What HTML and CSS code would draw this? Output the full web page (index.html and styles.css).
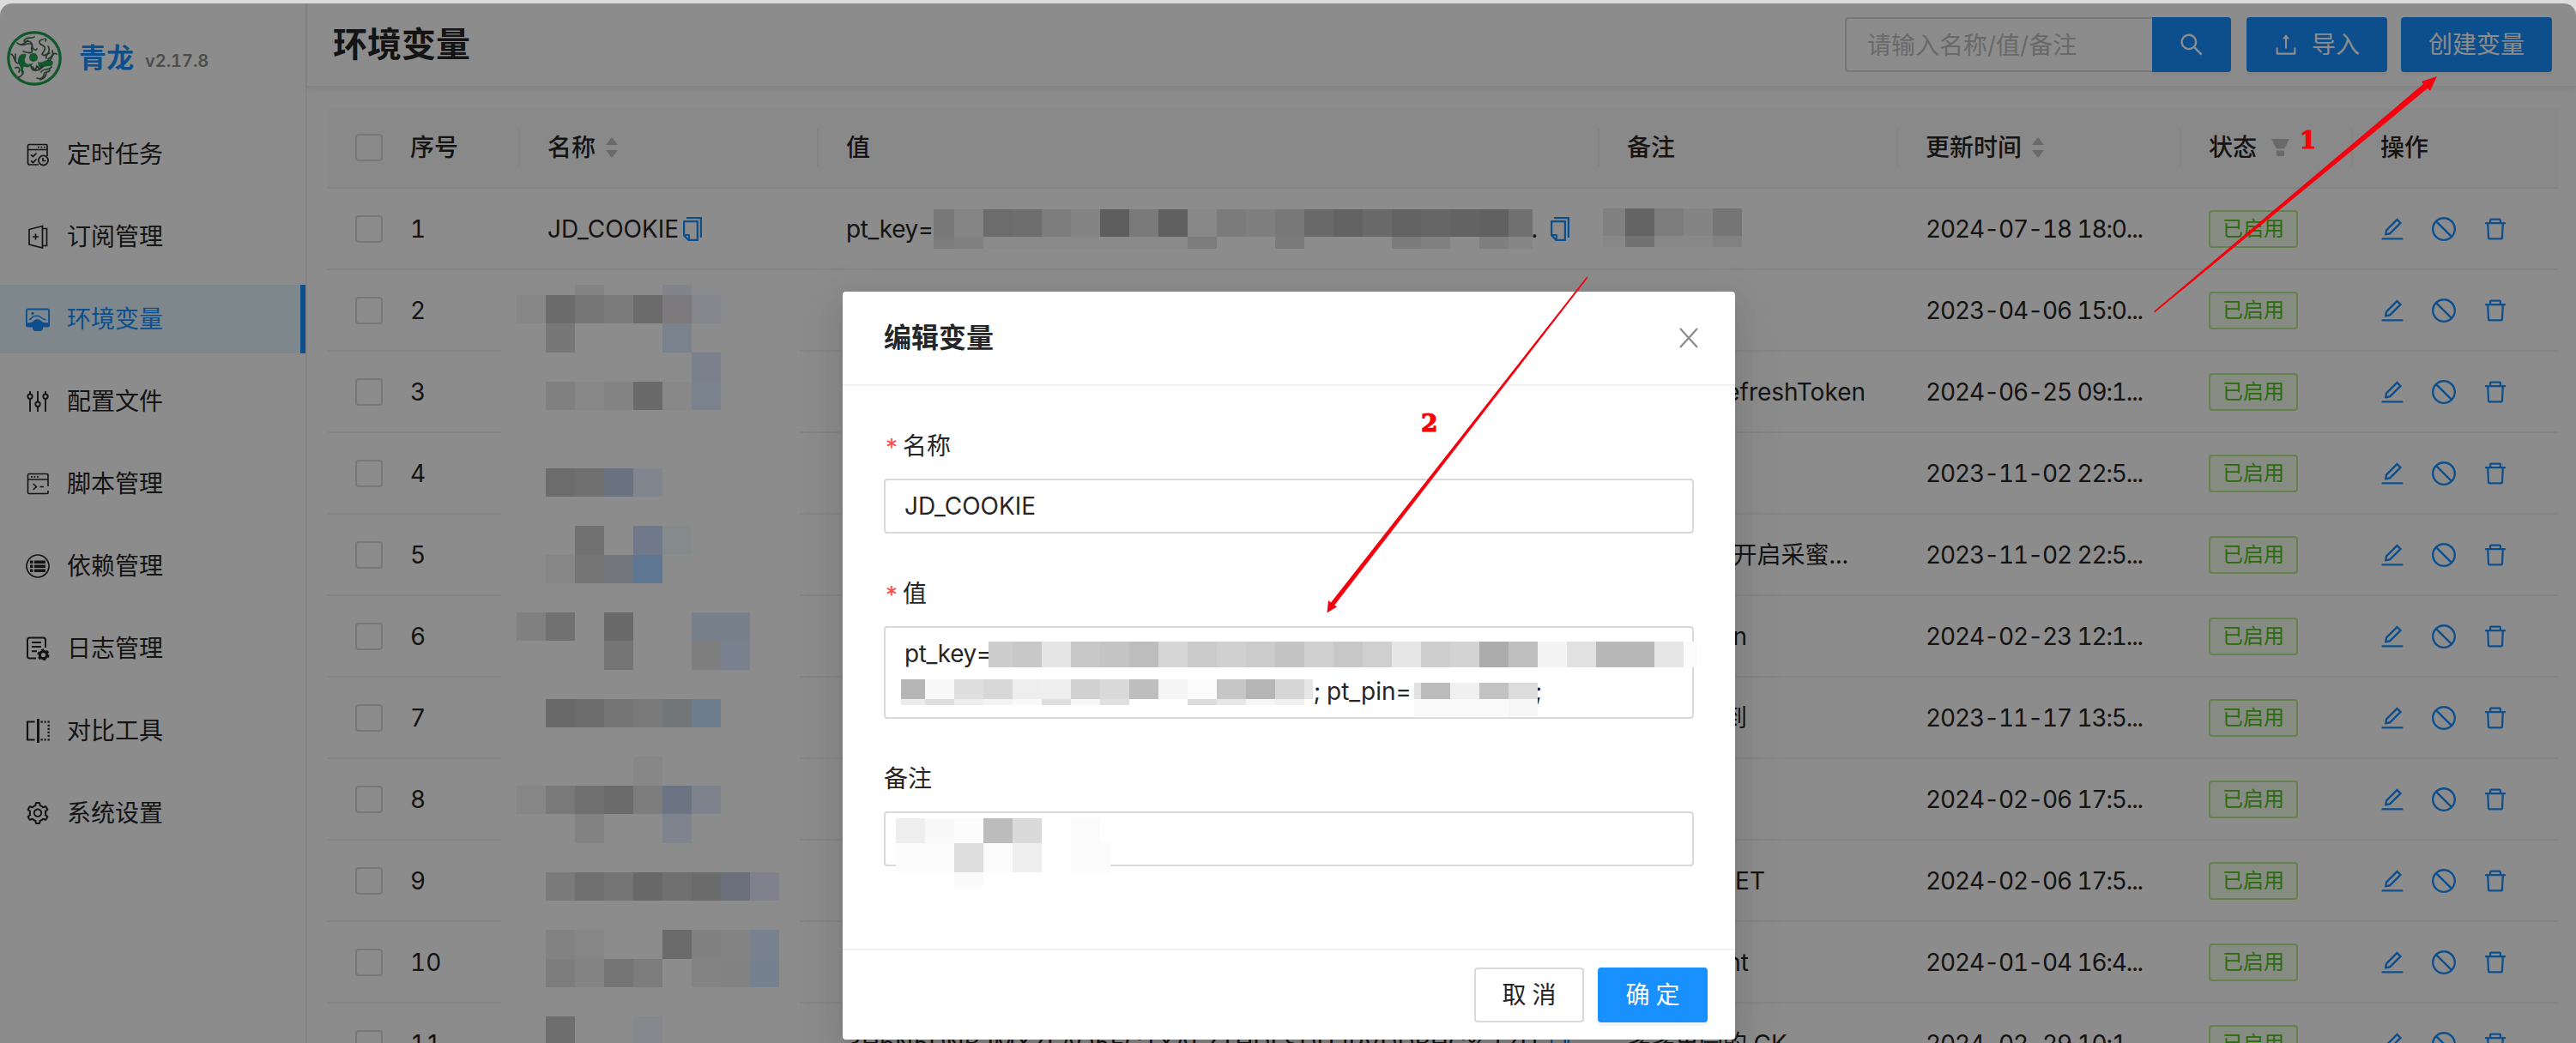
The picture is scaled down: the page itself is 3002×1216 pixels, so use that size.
FILE: index.html
```html
<!DOCTYPE html>
<html lang="zh-CN">
<head>
<meta charset="utf-8">
<title>环境变量</title>
<link rel="stylesheet" href="styles.css">
</head>
<body>
<svg class="sprite" width="0" height="0">
  <symbol id="i-search" viewBox="0 0 1024 1024"><path d="M909.6 854.5L649.9 594.8C690.2 542.7 712 479 712 412c0-80.2-31.3-155.4-87.9-212.1-56.6-56.7-132-87.9-212.1-87.9s-155.5 31.3-212.1 87.9C143.2 256.5 112 331.8 112 412c0 80.1 31.3 155.5 87.9 212.1C256.5 680.8 331.8 712 412 712c67 0 130.6-21.8 182.7-62l259.7 259.6a8.2 8.2 0 0011.6 0l43.6-43.5a8.2 8.2 0 000-11.6zM570.4 570.4C528 612.7 471.8 636 412 636s-116-23.3-158.4-65.6C211.3 528 188 471.8 188 412s23.3-116.1 65.6-158.4C296 211.3 352.2 188 412 188s116.1 23.2 158.4 65.6S636 352.2 636 412s-23.3 116.1-65.6 158.4z"/></symbol>
  <symbol id="i-upload" viewBox="0 0 28 28"><path d="M14 2.2l4.2 5.3h-3.1v11h-2.2v-11H9.800zM2.600 17.500h2.100v6h18.600v-6h2.100v7.200q0 1-1 1H3.600q-1 0-1-1z"/></symbol>
  <symbol id="i-edit" viewBox="0 0 1024 1024"><path d="M257.700 752c2 0 4-.2 6-.5L431.900 722c2-.4 3.900-1.300 5.300-2.800l423.900-423.900a9.960 9.960 0 000-14.100L694.900 114.900c-1.900-1.900-4.400-2.900-7.100-2.900s-5.200 1-7.100 2.900L256.800 538.800c-1.500 1.500-2.400 3.300-2.800 5.300l-29.500 168.200a33.500 33.500 0 009.400 29.800c6.600 6.400 14.900 9.900 23.800 9.900zm67.400-174.400L687.800 215l73.300 73.300-362.700 362.600-88.900 15.700 15.600-89zM880 836H144c-17.700 0-32 14.300-32 32v36c0 4.400 3.600 8 8 8h784c4.400 0 8-3.600 8-8v-36c0-17.700-14.300-32-32-32z"/></symbol>
  <symbol id="i-stop" viewBox="0 0 1024 1024"><path d="M512 64C264.600 64 64 264.600 64 512s200.600 448 448 448 448-200.600 448-448S759.400 64 512 64zm0 820c-205.400 0-372-166.600-372-372 0-89 31.300-170.800 83.500-234.800l523.300 523.300C682.800 852.700 601 884 512 884zm288.500-137.200L277.200 223.500C341.200 171.300 423 140 512 140c205.400 0 372 166.600 372 372 0 89-31.300 170.800-83.500 234.800z"/></symbol>
  <symbol id="i-delete" viewBox="0 0 1024 1024"><path d="M360 184h-8c4.400 0 8-3.600 8-8v8h304v-8c0 4.400 3.600 8 8 8h-8v72h72v-80c0-35.300-28.700-64-64-64H352c-35.300 0-64 28.700-64 64v80h72v-72zm504 72H160c-17.700 0-32 14.300-32 32v32c0 4.400 3.600 8 8 8h60.400l24.700 523c1.600 34.100 29.800 61 63.900 61h454c34.200 0 62.300-26.800 63.900-61l24.700-523H888c4.400 0 8-3.600 8-8v-32c0-17.700-14.300-32-32-32zM731.300 840H292.700l-24.200-512h487l-24.200 512z"/></symbol>
  <symbol id="i-copy" viewBox="0 0 1024 1024"><path d="M832 64H296c-4.400 0-8 3.600-8 8v56c0 4.400 3.600 8 8 8h496v688c0 4.400 3.600 8 8 8h56c4.400 0 8-3.600 8-8V96c0-17.700-14.300-32-32-32zM704 192H192c-17.700 0-32 14.300-32 32v530.700c0 8.500 3.400 16.600 9.400 22.600l173.300 173.300c2.200 2.200 4.700 4 7.400 5.500v1.900h4.200c3.500 1.300 7.200 2 11 2H704c17.700 0 32-14.300 32-32V224c0-17.700-14.300-32-32-32zM350 856.200L263.900 770H350v86.200zM664 888H414V746c0-22.100-17.900-40-40-40H232V264h432v624z"/></symbol>
  <symbol id="i-sort" viewBox="0 0 16 26"><path d="M8 1l7 9H1zM8 25l7-9H1z"/></symbol>
</svg>

<div class="window">
  <div class="app">
    <aside class="sidebar">
      <div class="brand">
        <svg class="logo" viewBox="0 0 64 64" stroke="#24a150" stroke-linecap="round">
          <circle cx="32" cy="32" r="30.200" stroke-width="3.300"/>
          <circle cx="31" cy="31" r="5" fill="#24a150" stroke="none"/>
          <path d="M13 37c-1-8 4-11 9-10 1 4-2 5-1 9 2 4 7 3 10 1-2 5-9 7-11 4-2 4 0 7-2 11-2-5-1-9-5-15z" fill="#24a150" stroke="none"/>
          <path d="M36 36c6 3 10-5 17-1 2 3 0 7-4 6-5 0-8 3-12 1z" fill="#24a150" stroke="none"/>
          <g stroke="#44694e" stroke-width="1.700">
            <path d="M12 14c5 5 10-1 13-3-5 3-6 1-4-1 4-4 8 0 11-3M16 16c5 2 9-4 13 0 2 3-2 3 0 6 2 4-3 4-6 3l-4-1M24 12c4 0 6 3 6 8 1 2 4 3 5 1"/>
            <path d="M42 10c-6 1-5 5 0 7 5 3 1 7-1 10 2 3 4 1 7-1 2-3 1-7 0-8M53 23c2 4-2 8-5 10M58 27c-6-3-4 7-10 8M50 26c-3 1-5 3-4 6M44 9c2 0 2 2 1 3"/>
            <path d="M5 27c5 2 2 9 8 11M10 27v8M10 43c4-2 6 2 4 5M17 46c5 2 0 7-3 8M28 40c0 5 3 8 10 5l4-3M30 42l3 4 2-5 3 4 3-5"/>
            <path d="M52 42c-3 5-10 1-12 6M50 46c-2 4-7 0-7 6-1 4-5 4-8 3M46 50c-1 4-4 6-7 7"/>
          </g>
        </svg>
        <span class="brand-name">青龙</span><span class="version">v2.17.8</span>
      </div>
      <nav class="menu">
        <a class="item"><svg viewBox="0 0 28 28"><g fill="none" stroke="currentColor" stroke-width="1.700"><path d="M15 26H4.500Q2.500 26 2.500 24V4q0-1.500 1.500-1.500h19.500q1.500 0 1.500 1.500v12M2.500 8.500H25M6 14.500l2.500 2 4-4M6 21.500l2.500 2 4-4"/><circle cx="20.500" cy="21" r="5.600"/><path d="M20 18v3.500h3.500"/></g><path d="M14 4.700h1.700v1.700H14zM17.500 4.700h1.700v1.700h-1.700zM21 4.700h1.700v1.700H21z"/></svg>定时任务</a>
        <a class="item"><svg viewBox="0 0 28 28"><g fill="none" stroke="currentColor" stroke-width="1.700"><path d="M4 5.500L19.500 1.500v25.500L4 23zM19.500 4.500H24.500v20H19.500M11.500 10.500v7M8 14h7"/></g></svg>订阅管理</a>
        <a class="item active"><svg viewBox="0 0 28 28"><path fill-rule="evenodd" d="M2.500 1.500h23q2.500 0 2.500 2.500V21q0 2.500-2.500 2.500H20v3h-1.500V28h-9v-1.500H8v-3H2.500Q0 23.500 0 21V4q0-2.500 2.500-2.500zM1.900 3.400v14.800h2.600q2.500-.2 4.500-1.700 4.500-5 10 .5 2 1.500 4 1.200h3.100V3.400z"/><path d="M4 14.800c4-1 3.500-4.500 6-4.300s4.500-1 7 1 3 3 6.500 3.300" fill="none" stroke="currentColor" stroke-width="1.500"/><circle cx="8" cy="7.300" r="1.600"/></svg>环境变量</a>
        <a class="item"><svg viewBox="0 0 28 28"><g fill="none" stroke="currentColor" stroke-width="1.900"><path d="M5 2v3.500M5 11v15M14 2v12.500M14 20v6M23 2v3.500M23 11v15"/><circle cx="5" cy="8.200" r="2.700"/><circle cx="14" cy="17.200" r="2.700"/><circle cx="23" cy="8.200" r="2.700"/></g></svg>配置文件</a>
        <a class="item"><svg viewBox="0 0 28 28"><g fill="none" stroke="currentColor" stroke-width="1.600"><path d="M26 17V3.500q0-1-1-1H3.500q-1 0-1 1v21q0 1 1 1H25q1 0 1-1V22M2.500 9H26M8.500 14l4 3.500-4 3.500M16.500 17.500H21"/></g><path d="M6 5h1.800v1.800H6zM9.500 5h1.800v1.800H9.500zM13 5h1.800v1.800H13z"/></svg>脚本管理</a>
        <a class="item"><svg viewBox="0 0 28 28"><circle cx="14" cy="14" r="13" fill="none" stroke="currentColor" stroke-width="1.700"/><path d="M5 7.500h3.500V11H5zM10 7.500h13V11H10zM5 12.500h3.500V16H5zM10 12.500h13V16H10zM5 17.500h3.500V21H5zM10 17.500h13V21H10z"/></svg>依赖管理</a>
        <a class="item"><svg viewBox="0 0 28 28"><path d="M12 25.500H4.500Q2 25.500 2 23V4q0-2.500 2.500-2.500h16Q23 1.500 23 4v9M7 7h11M7 12h11M7 17.200h6" fill="none" stroke="currentColor" stroke-width="2"/><circle cx="20.500" cy="21.500" r="4.200" fill="none" stroke="currentColor" stroke-width="3.200"/><circle cx="20.500" cy="21.500" r="6.200" fill="none" stroke="currentColor" stroke-width="1.800" stroke-dasharray="3.300 3.190"/></svg>日志管理</a>
        <a class="item"><svg viewBox="0 0 28 28"><path d="M10.500 3.500H2v21h8.500" fill="none" stroke="currentColor" stroke-width="2.200"/><path d="M13 0h3v28h-3zM17.500 2.500h2.200v2.200h-2.200zM21.500 2.500h2.200v2.200h-2.200zM25.500 2.500h2.200v2.200h-2.200zM25.500 6.800h2.200V9h-2.200zM25.500 10.800h2.200V13h-2.200zM25.500 14.800h2.200V17h-2.200zM25.500 18.800h2.200V21h-2.200zM17.500 23.300h2.200v2.200h-2.200zM21.500 23.300h2.200v2.200h-2.200zM25.500 23.300h2.200v2.200h-2.200z"/></svg>对比工具</a>
        <a class="item"><svg viewBox="32 32 960 960"><path d="M924.800 625.700l-65.500-56c3.100-19 4.700-38.400 4.700-57.800s-1.600-38.800-4.700-57.800l65.500-56a32.030 32.030 0 009.300-35.200l-.9-2.600a443.740 443.740 0 00-79.700-137.900l-1.800-2.100a32.120 32.120 0 00-35.100-9.500l-81.300 28.900c-30-24.600-63.500-44-99.700-57.600l-15.700-85a32.050 32.050 0 00-25.800-25.700l-2.700-.5c-52.100-9.400-106.900-9.400-159 0l-2.700.5a32.050 32.050 0 00-25.800 25.700l-15.800 85.400a351.860 351.860 0 00-99 57.400l-81.900-29.100a32 32 0 00-35.100 9.500l-1.800 2.100a446.020 446.020 0 00-79.700 137.900l-.9 2.600c-4.500 12.500-.8 26.500 9.300 35.200l66.300 56.600c-3.100 18.800-4.600 38-4.600 57.100 0 19.200 1.500 38.400 4.600 57.100L99 625.500a32.030 32.030 0 00-9.300 35.200l.9 2.600c18.100 50.400 44.900 96.900 79.700 137.900l1.800 2.100a32.120 32.120 0 0035.100 9.500l81.900-29.100c29.800 24.500 63.100 43.900 99 57.400l15.800 85.400a32.050 32.050 0 0025.800 25.700l2.700.5a449.400 449.400 0 00159 0l2.700-.5a32.050 32.050 0 0025.800-25.700l15.700-85a350 350 0 0099.700-57.600l81.300 28.900a32 32 0 0035.100-9.500l1.800-2.100c34.800-41.100 61.600-87.500 79.700-137.900l.9-2.600c4.500-12.300.8-26.300-9.300-35zM788.300 465.900c2.500 15.100 3.800 30.600 3.800 46.100s-1.300 31-3.800 46.100l-6.600 40.100 74.700 63.900a370.030 370.030 0 01-42.600 73.600L721 702.800l-31.400 25.800c-23.900 19.600-50.500 35-79.300 45.800l-38.100 14.300-17.900 97a377.500 377.500 0 01-85 0l-17.900-97.200-37.800-14.500c-28.500-10.800-55-26.200-78.700-45.700l-31.400-25.900-93.400 33.200c-17-22.900-31.200-47.600-42.600-73.600l75.500-64.500-6.500-40c-2.400-14.900-3.700-30.300-3.700-45.500 0-15.300 1.200-30.600 3.700-45.500l6.500-40-75.500-64.500c11.300-26.100 25.600-50.700 42.600-73.600l93.400 33.200 31.400-25.900c23.700-19.500 50.200-34.900 78.700-45.700l37.900-14.300 17.900-97.200c28.100-3.200 56.800-3.200 85 0l17.900 97 38.100 14.300c28.700 10.800 55.400 26.200 79.300 45.800l31.400 25.800 92.800-32.900c17 22.900 31.200 47.600 42.600 73.600L781.800 426l6.500 39.900zM512 326c-97.200 0-176 78.800-176 176s78.800 176 176 176 176-78.800 176-176-78.800-176-176-176zm79.200 255.200A111.600 111.600 0 01512 614c-29.900 0-58-11.700-79.200-32.800A111.600 111.600 0 01400 502c0-29.900 11.700-58 32.800-79.200C454 401.600 482.100 390 512 390c29.900 0 58 11.600 79.200 32.800A111.600 111.600 0 01624 502c0 29.900-11.700 58-32.800 79.200z"/></svg>系统设置</a>
      </nav>
    </aside>
    <main class="main">
      <header class="header">
        <h1>环境变量</h1>
        <div class="search"><div class="search-input">请输入名称/值/备注</div><button class="btn primary search-btn"><svg><use href="#i-search"/></svg></button></div>
        <button class="btn primary"><svg><use href="#i-upload"/></svg>导入</button>
        <button class="btn primary">创建变量</button>
      </header>
      <section class="table">
        <div class="row head">
          <div class="cell check"><i class="box"></i></div>
          <div class="cell">序号</div>
          <div class="cell">名称<svg class="sort"><use href="#i-sort"/></svg></div>
          <div class="cell">值</div>
          <div class="cell">备注</div>
          <div class="cell">更新时间<svg class="sort"><use href="#i-sort"/></svg></div>
          <div class="cell">状态<svg class="filter" viewBox="0 0 21 20"><path d="M0 0h21l-6 11.500H6zM6 13.500h9V19q0 1-1 1H7q-1 0-1-1z"/></svg></div>
          <div class="cell">操作</div>
        </div>
        <div id="rows"></div>
      </section>
    </main>
    <div class="mask"></div>
  </div>

  <div class="modal">
    <div class="modal-head"><span>编辑变量</span><svg class="close" viewBox="0 0 24 26"><path d="M2 2l20 22M22 2L2 24" fill="none" stroke="#8a8a8a" stroke-width="2.200"/></svg></div>
    <div class="modal-body">
      <label class="label"><b>*</b>名称</label>
      <div class="field">JD_COOKIE</div>
      <label class="label"><b>*</b>值</label>
      <div class="field area"><div class="first">pt_key=</div><div class="second"><span class="pin">; pt_pin=</span><span>;</span></div></div>
      <label class="label">备注</label>
      <div class="field"></div>
    </div>
    <div class="modal-foot"><button class="btn plain">取消</button><button class="btn primary spaced">确定</button></div>
  </div>

  <svg class="overlay" viewBox="0 0 3002 1216">
    <g id="mosaic" shape-rendering="crispEdges"></g>
    <g fill="#f4000f">
      <path d="M2510 363L2824 98l-2-3 18-6-8 17-3-3L2511 364.500z"/>
      <path d="M1849.300 322.500L1551 702.500l-3-2.500-1.500 14.500 11.500-7-2.700-2L1850.700 323.500z"/>
    </g>
    <text class="mark" x="2680" y="173">1</text>
    <text class="mark" x="1656" y="502.500">2</text>
  </svg>
</div>
<script src="app.js"></script>
</body>
</html>
```
FILE: styles.css
```css
* { box-sizing: border-box; }
body {
  margin: 0;
  font-family: Inter, "Noto Sans CJK SC", sans-serif;
  font-size: 28px;
  line-height: 44px;
  color: #262626;
  font-variant-numeric: tabular-nums;
}
.sprite { position: absolute; }
svg { display: block; fill: currentColor; flex: none; }

.window { position: relative; width: 3002px; height: 1216px; padding-top: 4px; background: #dcdcdc; overflow: hidden; }
.app { position: relative; display: flex; height: 1212px; background: #fff; border-radius: 14px 14px 0 0; overflow: hidden; }
.mask { position: absolute; inset: 0; background: rgba(0, 0, 0, .45); }

.sidebar { width: 358px; border-right: 2px solid #f0f0f0; flex: none; }
.brand { display: flex; align-items: center; height: 128px; padding-left: 8px; }
.logo { width: 64px; height: 64px; fill: none; }
.brand-name { margin-left: 20px; font-size: 32px; font-weight: 700; color: #1890ff; }
.version { margin: 6px 0 0 13px; font-size: 20px; font-weight: 600; color: #8c8c8c; }
.menu { display: flex; flex-direction: column; gap: 16px; padding-top: 8px; }
.item { display: flex; align-items: center; gap: 20px; height: 80px; padding-left: 30px; }
.item svg { width: 28px; height: 28px; }
.item.active { background: #e6f7ff; color: #1890ff; border-right: 6px solid #1890ff; }

.main { flex: 1; min-width: 0; }
.header { display: flex; align-items: center; gap: 16px; height: 98px; padding: 0 28px 0 30px; border-bottom: 2px solid #f0f0f0; box-shadow: 0 2px 6px rgba(0, 0, 0, .07); }
h1 { flex: 1; margin: 0; font-size: 40px; font-weight: 700; }
.search { display: flex; margin-right: 2px; }
.search-input { width: 358px; height: 64px; padding: 9px 24px; border: 2px solid #d9d9d9; border-right: 0; border-radius: 4px 0 0 4px; color: #bfbfbf; }
.btn { display: flex; align-items: center; justify-content: center; gap: 16px; height: 64px; padding: 0 32px; border: 0; border-radius: 4px; font: inherit; }
.btn svg { width: 28px; height: 28px; }
.primary { background: #1890ff; color: #fff; box-shadow: 0 4px 0 rgba(0, 0, 0, .043); }
.search-btn { border-radius: 0 4px 4px 0; padding: 0 30px; }
.search-btn svg { width: 32px; height: 32px; }

.table { margin: 24px 20px 0 24px; }
.row { display: grid; grid-template-columns: 64px 160px 348px 910px 348px 330px 200px 240px; height: 95px; border-bottom: 2px solid #f0f0f0; align-items: center; }
.cell { position: relative; display: flex; align-items: center; height: 44px; padding-left: 32px; white-space: nowrap; }
.box { width: 32px; height: 32px; border: 2px solid #d9d9d9; border-radius: 4px; flex: none; }
.head { height: 94px; background: #fafafa; font-weight: 500; }
.head .cell:nth-child(n+2):not(:last-child) { border-right: 2px solid #f0f0f0; }
.sort { width: 16px; height: 26px; margin-left: 11px; color: #bfbfbf; }
.filter { width: 21px; height: 20px; margin-left: 17px; color: #bfbfbf; }
.copy { width: 32px; height: 32px; color: #1890ff; }
.dot { width: 806px; display: flex; justify-content: space-between; overflow: hidden; }
.dot + .copy { margin-left: 10px; }
.pt, .first { letter-spacing: -.4px; }
.time { letter-spacing: -1.150px; }
.note { text-align: right; }
.tag { height: 44px; padding: 0 14px; border: 2px solid #b7eb8f; border-radius: 4px; background: #f6ffed; color: #52c41a; font-size: 24px; line-height: 40px; }
.ops { gap: 28px; padding-left: 30px; color: #1890ff; }
.ops svg { width: 32px; height: 32px; }

.modal { position: absolute; left: 982px; top: 340px; width: 1040px; height: 872px; display: flex; flex-direction: column; background: #fff; border-radius: 4px; box-shadow: 0 6px 12px -8px rgba(0, 0, 0, .12), 0 12px 32px rgba(0, 0, 0, .08), 0 18px 56px 16px rgba(0, 0, 0, .05); }
.modal-head { display: flex; align-items: center; justify-content: space-between; height: 110px; padding: 0 42px 0 48px; border-bottom: 2px solid #f0f0f0; font-size: 32px; font-weight: 600; }
.close { width: 24px; height: 26px; }
.modal-body { flex: 1; padding: 48px 48px 0; }
.label { display: flex; align-items: center; height: 44px; margin-bottom: 16px; }
.label b { width: 22px; font-weight: 400; color: #ff4d4f; padding-top: 4px; }
.field { height: 64px; margin-bottom: 48px; padding: 8px 22px; border: 2px solid #d9d9d9; border-radius: 4px; }
.area { height: 108px; }
.second { display: flex; padding-left: 477px; }
.pin { width: 258px; }
.modal-foot { display: flex; justify-content: flex-end; gap: 16px; height: 106px; padding: 20px 32px; border-top: 2px solid #f0f0f0; }
.modal-foot .btn { width: 128px; letter-spacing: 7px; padding: 0 0 0 7px; }
.plain { background: #fff; border: 2px solid #d9d9d9; color: #262626; }

.overlay { position: absolute; left: 0; top: 0; width: 3002px; height: 1216px; }
.mark { font: 700 28px "DejaVu Serif", serif; fill: #fb0007; stroke: #fb0007; stroke-width: 1.200px; }
```
FILE: app.js
```js
// [time, note, right edge of the note text]
const rows = [
  ["2024-07-18 18:0...", "", 0],
  ["2023-04-06 15:0...", "", 0],
  ["2024-06-25 09:1...", "refreshToken", 278],
  ["2023-11-02 22:5...", "", 0],
  ["2023-11-02 22:5...", "开启采蜜...", 258],
  ["2024-02-23 12:1...", "n", 140],
  ["2023-11-17 13:5...", "到", 140],
  ["2024-02-06 17:5...", "", 0],
  ["2024-02-06 17:5...", "ET", 161],
  ["2024-01-04 16:4...", "nt", 142],
  ["2024-02-29 10:1...", "多多果园的 CK", 186],
];
const icon = (id, cls = "") => `<svg class="${cls}"><use href="#i-${id}"/></svg>`;
document.getElementById("rows").innerHTML = rows.map(([time, note, edge], i) => {
  const name = i === 0 ? "JD_COOKIE" + icon("copy", "copy") : "";
  let value = "";
  if (i === 0) value = `<span class="dot"><span class="pt">pt_key=</span><span>.</span></span>${icon("copy", "copy")}`;
  if (i === 10) value = `<span class="dot">3H6N5DNBJMXZLAQ5EG1XALZTHDLSDUJRVDDBHC%1ZU...</span>${icon("copy", "copy")}`;
  return `<div class="row"><div class="cell check"><i class="box"></i></div><div class="cell">${i + 1}</div>
    <div class="cell name">${name}</div><div class="cell">${value}</div>
    <div class="cell"><span class="note" style="width:${edge}px">${note}</span></div>
    <div class="cell time">${time}</div><div class="cell"><span class="tag">已启用</span></div>
    <div class="cell ops">${icon("edit")}${icon("stop")}${icon("delete")}</div></div>`;
}).join("");

// Pixelated blocks: [y, height, "x[:width] colour, ..."], default width 34
const mosaic = [
  [326, 890, "584:348 8c8c8c"],
  [332, 12, "670 838383,772 81848a"],
  [344, 33, "602 878787,636 6b6b6b,670 777777,704 7b7b7b,738 6b6b6b,772 7d7a7d,806 85868c"],
  [377, 34, "636 777777,772 7a828e"],
  [411, 34, "806 7a818c"],
  [445, 33, "636 808080,670 888888,704 838383,738 6a6a6a,772 888888,806 7a828e"],
  [546, 33, "636 6c6c6c,670 6f6f6f,704 6b7380,738 81858e"],
  [613, 34, "670 717171,738 70798a,772 858a8c"],
  [647, 33, "636 868686,670 747474,704 74777d,738 5f7793"],
  [714, 33, "602 808080,636 717171,704 6a6a6a,806:68 78808c"],
  [747, 34, "704 757575,806 7f7f7f,840 78818d"],
  [815, 33, "636 6a6a6a,670 6c6c6c,704 757575,738 797979,772 737677,806 6e7d8b"],
  [882, 34, "738 878787"],
  [916, 33, "602 868686,636 797979,670 707070,704 6b6b6b,738 7d7d7d,772 6c7382,806 7d828c"],
  [949, 34, "670 828282,772 7e838d"],
  [1017, 33, "636 7a7a7a,670 707070,704 747474,738 686868,772 707070,806 6b6b6b,840 6c707d,874 80818c"],
  [1084, 34, "636 828282,670 868686,772 6b6b6b,806 808080,840 838383,874 78828f"],
  [1118, 33, "636 7d7d7d,670 848484,704 747474,738 7c7c7c,806 838383,840 828282,874 76818f"],
  [1185, 31, "636 6e6e6e,738 86888d"],
  [244, 32, "1088:24 787878,1112 858585,1146 6c6c6c,1180 6e6e6e,1214 7c7c7c,1248 848484,1282 5e5e5e,1316 7a7a7a,1350 5f5f5f,1384 888888,1418 7b7b7b,1452 7f7f7f,1486 787878,1520 6a6a6a,1554 636363,1588 6a6a6a,1622 626262,1656 666666,1690 636363,1724 616161,1758:28 707070"],
  [276, 14, "1088:24 7c7c7c,1112 808080,1146:238 8a8a8a,1384 7c7c7c,1486 7a7a7a,1622 7b7b7b,1656 808080,1724 7f7f7f,1758:28 858585"],
  [243, 32, "1868:26 808080,1894 646464,1928 7c7c7c,1962 848484,1996 757575"],
  [275, 13, "1868:26 888888,1894 727272,1928:68 888888,1996 818181"],
  [748, 30, "1152:28 cdcdcd,1180 c8c8c8,1214 e5e5e5,1248 c8c8c8,1282 c4c4c4,1316 bdbdbd,1350 d6d6d6,1384 cbcbcb,1418 d0d0d0,1452 cccccc,1486 c3c3c3,1520 d0d0d0,1554 c7c7c7,1588 cfcfcf,1622 e7e7e7,1656 cecece,1690 d3d3d3,1724 acacac,1758 bfbfbf,1792 f4f4f4,1826 e1e1e1,1860:68 b8b8b8,1928 e6e6e6,1962:16 fbfbfb"],
  [792, 23, "1050:28 b5b5b5,1078 f8f8f8,1112 dfdfdf,1146 d8d8d8,1180 eeeeee,1214 efefef,1248 d2d2d2,1282 dadada,1316 bebebe,1350 f5f5f5,1384 fbfbfb,1418 c6c6c6,1452 b5b5b5,1486 d6d6d6,1520:10 e6e6e6"],
  [815, 7, "1050:28 ececec,1078 dedede,1112 eeeeee,1146 f3f3f3,1180 f9f9f9,1214 dedede,1248 f6f6f6,1282 e0e0e0,1384 dcdcdc,1418 e7e7e7,1452 f5f5f5,1486 f0f0f0"],
  [796, 19, "1648:8 e2e2e2,1656 bcbcbc,1690 f0f0f0,1724 c2c2c2,1758 dcdcdc"],
  [815, 20, "1648:110 fafafa,1758 f6f6f6"],
  [983, 34, "1044:250 ffffff"],
  [954, 29, "1044 eeeeee,1078 f9f9f9,1112 fcfcfc,1146 bcbcbc,1180 dadada,1248 fbfbfb"],
  [983, 34, "1044:68 fbfbfb,1112 dedede,1146 fbfbfb,1180 efefef,1248:46 fbfbfb"],
  [1017, 16, "1112 fafafa"],
];
document.getElementById("mosaic").innerHTML = mosaic.map(([y, h, cells]) =>
  cells.split(",").map(c => {
    const [pos, fill] = c.split(" ");
    const [x, w = 34] = pos.split(":");
    return `<rect x="${x}" y="${y}" width="${w}" height="${h}" fill="#${fill}"/>`;
  }).join("")).join("");
```
